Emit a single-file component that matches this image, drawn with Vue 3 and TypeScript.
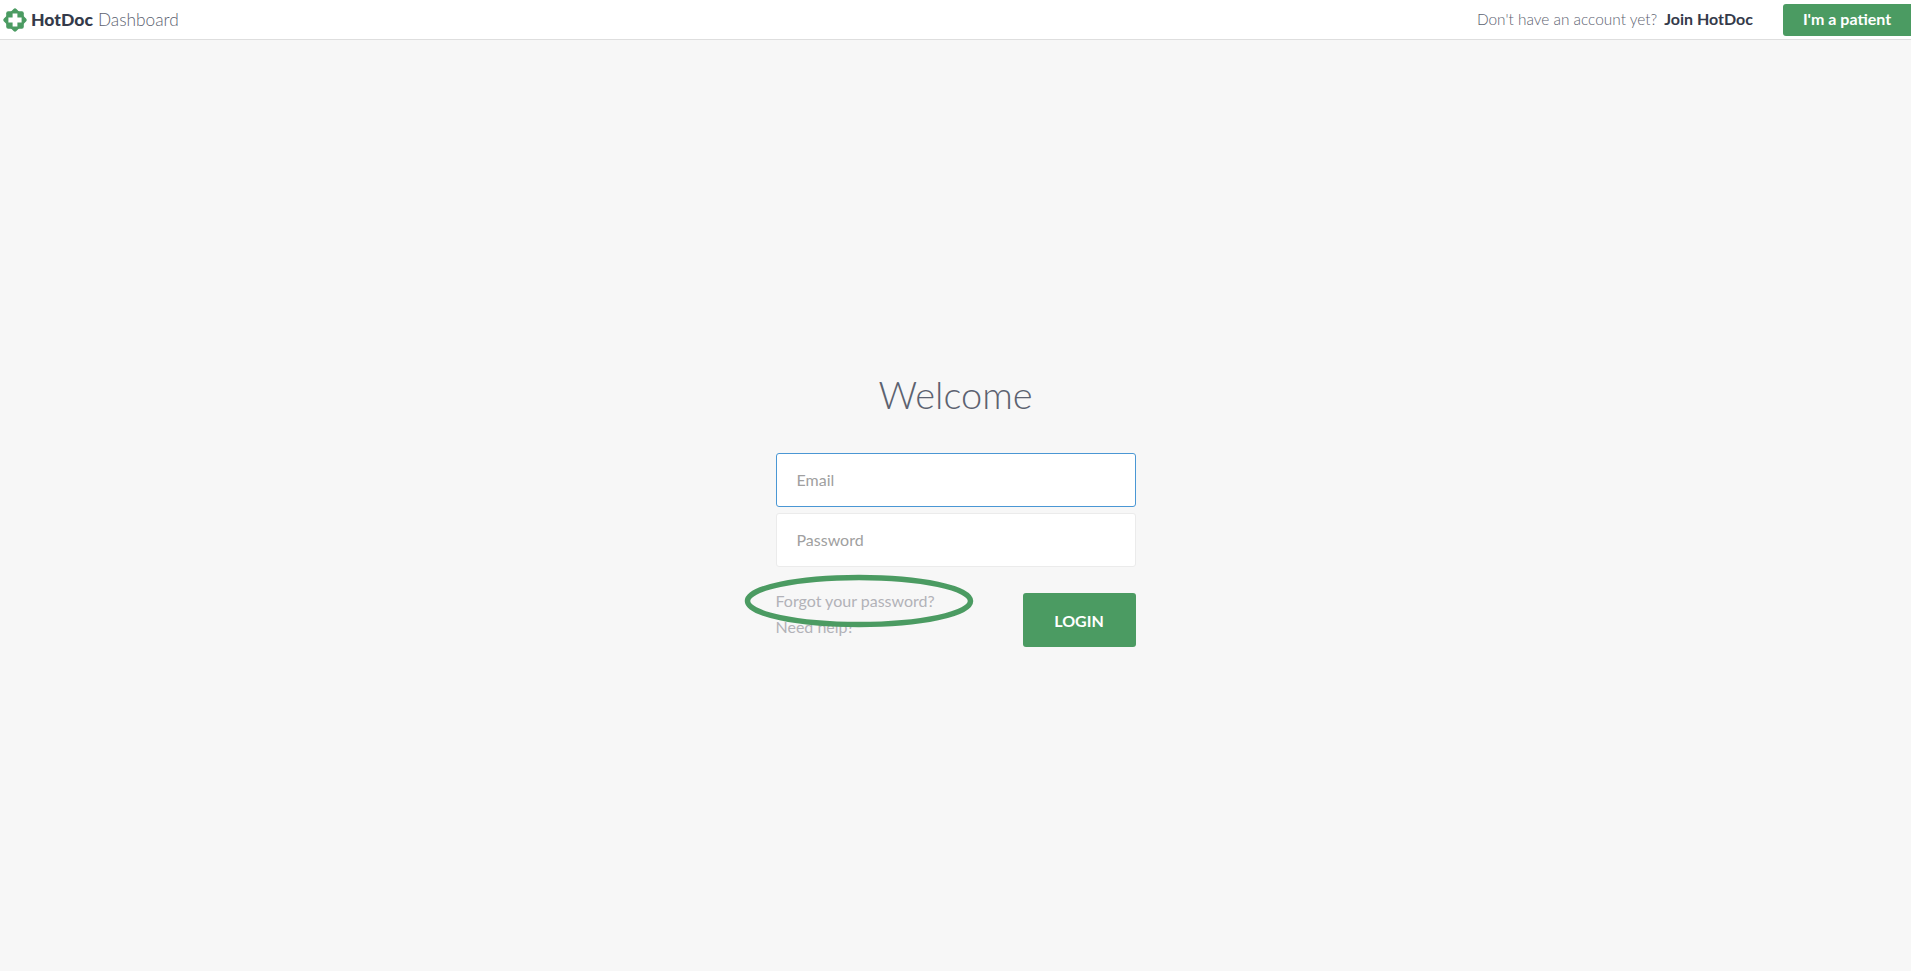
<template>
  <div class="page">
    <header class="topbar">
      <div class="brand">
        <svg class="logo" viewBox="0 0 24 24" width="24" height="24">
          <rect x="3.2" y="3.2" width="17.6" height="17.6" rx="2" fill="#4b9b62" />
          <rect x="3.2" y="3.2" width="17.6" height="17.6" rx="2" fill="#4b9b62" transform="rotate(45 12 12)" />
          <path fill="#fff" d="M9.6 5.4h4.8v4.2h4.2v4.8h-4.2v4.2H9.6v-4.2H5.4V9.6h4.2z" />
        </svg>
        <span class="brand-name">HotDoc</span>
        <span class="brand-sub">Dashboard</span>
      </div>
      <div class="account">
        <span class="account-text">Don't have an account yet?</span>
        <a class="join">Join HotDoc</a>
        <button class="patient" type="button">I'm a patient</button>
      </div>
    </header>

    <main class="content">
      <h1 class="title">Welcome</h1>
      <form class="login-form" @submit.prevent>
        <input class="field field-focus" type="text" placeholder="Email" />
        <input class="field" type="password" placeholder="Password" />
        <div class="form-foot">
          <div class="links">
            <a class="link">Forgot your password?</a>
            <a class="link">Need help?</a>
            <svg class="circle" viewBox="0 0 230 54" width="230" height="54">
              <ellipse cx="115" cy="27" rx="111.5" ry="23.5" fill="none" stroke="#4b9b62" stroke-width="5.5" />
            </svg>
          </div>
          <button class="login" type="submit">LOGIN</button>
        </div>
      </form>
    </main>
  </div>
</template>

<script setup lang="ts">
</script>

<style>
html,
body {
  margin: 0;
  background: #f7f7f7;
}
</style>

<style scoped>
.page {
  height: 971px;
  display: flex;
  flex-direction: column;
  background: #f7f7f7;
  font-family: Lato, "Liberation Sans", sans-serif;
  overflow: hidden;
}

.topbar {
  height: 39px;
  flex-shrink: 0;
  display: flex;
  align-items: center;
  justify-content: space-between;
  padding-left: 3px;
  background: #fff;
  border-bottom: 1px solid #dedede;
}

.brand {
  display: flex;
  align-items: center;
}

.logo {
  margin-right: 4px;
}

.brand-name {
  font-size: 17.6px;
  font-weight: 900;
  color: #343a4a;
  margin-right: 5px;
}

.brand-sub {
  font-size: 17.3px;
  font-weight: 300;
  color: #5c6270;
}

.account {
  display: flex;
  align-items: center;
}

.account-text {
  font-size: 15.4px;
  font-weight: 300;
  color: #5c6270;
  margin-right: 7px;
  padding-bottom: 2px;
}

.join {
  font-size: 16px;
  font-weight: 700;
  color: #343a4a;
  margin-right: 30px;
  padding-bottom: 2px;
}

.patient {
  width: 128px;
  height: 32px;
  padding: 0 0 2px;
  border: none;
  border-radius: 3px 0 0 3px;
  background: #4b9b62;
  color: #fff;
  font-family: inherit;
  font-size: 16px;
  font-weight: 700;
}

.content {
  display: flex;
  flex-direction: column;
  align-items: center;
  padding-top: 312px;
}

.title {
  margin: 0 0 17px;
  height: 84px;
  line-height: 84px;
  font-size: 38px;
  font-weight: 300;
  color: #5c6270;
}

.login-form {
  width: 360px;
  display: flex;
  flex-direction: column;
}

.field {
  box-sizing: border-box;
  width: 360px;
  height: 54px;
  margin-bottom: 6px;
  padding: 0 20px 2px;
  border: 1px solid #ebebeb;
  border-radius: 3px;
  background: #fff;
  font-family: inherit;
  font-size: 16px;
  outline: none;
}

.field::placeholder {
  color: #a0a0a0;
  opacity: 1;
}

.field-focus {
  border-color: #4a97d4;
}

.form-foot {
  display: flex;
  justify-content: space-between;
  margin-top: 20px;
}

.links {
  position: relative;
  display: flex;
  flex-direction: column;
  gap: 6px;
  margin-top: -2px;
}

.link {
  font-size: 16px;
  line-height: 20px;
  color: #b2b2b8;
}

.circle {
  position: absolute;
  left: -32px;
  top: -17px;
}

.login {
  width: 113px;
  height: 54px;
  padding: 0;
  border: none;
  border-radius: 3px;
  background: #4b9b62;
  color: #fff;
  font-family: inherit;
  font-size: 16px;
  font-weight: 700;
}
</style>
